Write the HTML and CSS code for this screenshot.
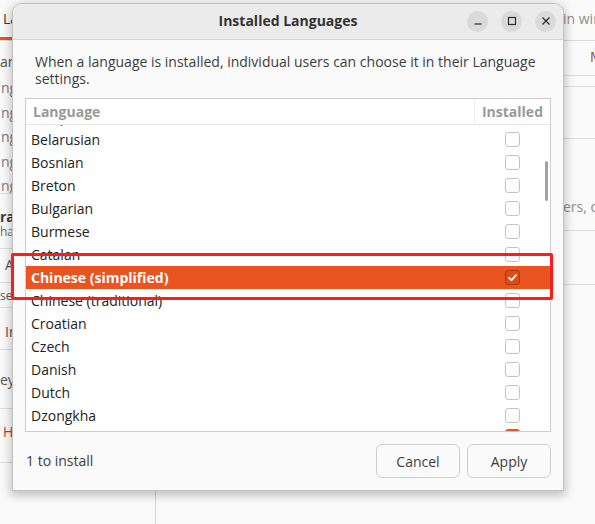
FILE: index.html
```
<!DOCTYPE html>
<html>
<head>
<meta charset="utf-8">
<link rel="stylesheet" href="styles.css">
</head>
<body>
<div class="desktop">
  <div class="bgwin">
    <div class="bg-left">
      <div class="bl-tabs"><span class="bl-tab">Lan</span></div>
      <div class="bl-sec bl-langs">
        <div class="bl-label">ang</div>
        <div class="bl-item">ngl</div>
        <div class="bl-item">ngl</div>
        <div class="bl-item">ngl</div>
        <div class="bl-item">ngl</div>
        <div class="bl-item">ngl</div>
      </div>
      <div class="bl-sec bl-drag">
        <div class="bl-bold">rag</div>
        <div class="bl-small">han</div>
      </div>
      <div class="bl-sec bl-apply">Ap</div>
      <div class="bl-sec bl-use">se</div>
      <div class="bl-sec bl-inst">Ins</div>
      <div class="bl-sec bl-key">eyb</div>
      <div class="bl-sec bl-help">He</div>
      <div class="bl-foot"></div>
    </div>
    <div class="bg-right">
      <div class="br-row br-1">in windows:</div>
      <div class="br-row br-2"><span class="br-m">M</span></div>
      <div class="br-row br-3"></div>
      <div class="br-row br-4"></div>
      <div class="br-row br-5">ers, dates and currency amounts.</div>
      <div class="br-row br-6"></div>
    </div>
  </div>

  <div class="dialog">
    <header class="dlg-head">
      <div class="dlg-spacer"></div>
      <div class="dlg-title">Installed Languages</div>
      <div class="wctl">
        <span class="wbtn"><svg width="10" height="10" viewBox="0 0 10 10"><line x1="1.5" y1="8" x2="8.5" y2="8"/></svg></span>
        <span class="wbtn"><svg width="10" height="10" viewBox="0 0 10 10"><rect x="1.5" y="1.5" width="7" height="7"/></svg></span>
        <span class="wbtn"><svg width="10" height="10" viewBox="0 0 10 10"><line x1="1.5" y1="1.5" x2="8.5" y2="8.5"/><line x1="8.5" y1="1.5" x2="1.5" y2="8.5"/></svg></span>
      </div>
    </header>
    <div class="dlg-body">
      <p class="intro">When a language is installed, individual users can choose it in their Language settings.</p>
      <div class="langlist">
        <div class="ll-head">
          <div class="col-lang">Language</div>
          <div class="col-inst">Installed</div>
        </div>
        <div class="ll-view">
          <div class="ll-rows">
            <div class="ll-row"><span class="ll-name">Basque</span><span class="ll-check"><span class="cb"></span></span></div>
            <div class="ll-row"><span class="ll-name">Belarusian</span><span class="ll-check"><span class="cb"></span></span></div>
            <div class="ll-row"><span class="ll-name">Bosnian</span><span class="ll-check"><span class="cb"></span></span></div>
            <div class="ll-row"><span class="ll-name">Breton</span><span class="ll-check"><span class="cb"></span></span></div>
            <div class="ll-row"><span class="ll-name">Bulgarian</span><span class="ll-check"><span class="cb"></span></span></div>
            <div class="ll-row"><span class="ll-name">Burmese</span><span class="ll-check"><span class="cb"></span></span></div>
            <div class="ll-row"><span class="ll-name">Catalan</span><span class="ll-check"><span class="cb"></span></span></div>
            <div class="ll-row is-selected"><span class="ll-name">Chinese (simplified)</span><span class="ll-check"><span class="cb cb-on"><svg width="13" height="13" viewBox="0 0 13 13"><polyline points="3,6.8 5.6,9.2 10,4.2"/></svg></span></span></div>
            <div class="ll-row"><span class="ll-name">Chinese (traditional)</span><span class="ll-check"><span class="cb"></span></span></div>
            <div class="ll-row"><span class="ll-name">Croatian</span><span class="ll-check"><span class="cb"></span></span></div>
            <div class="ll-row"><span class="ll-name">Czech</span><span class="ll-check"><span class="cb"></span></span></div>
            <div class="ll-row"><span class="ll-name">Danish</span><span class="ll-check"><span class="cb"></span></span></div>
            <div class="ll-row"><span class="ll-name">Dutch</span><span class="ll-check"><span class="cb"></span></span></div>
            <div class="ll-row"><span class="ll-name">Dzongkha</span><span class="ll-check"><span class="cb"></span></span></div>
            <div class="ll-row ll-last"><span class="ll-name">English</span><span class="ll-check"><span class="cb cb-inst"></span></span></div>
          </div>
          <div class="scrollind"></div>
        </div>
      </div>
    </div>
    <footer class="dlg-foot">
      <span class="status">1 to install</span>
      <div class="btns">
        <button class="btn">Cancel</button>
        <button class="btn">Apply</button>
      </div>
    </footer>
  </div>

  <div class="annot"></div>
</div>
</body>
</html>
```
FILE: styles.css
```
* { box-sizing: border-box; }
html, body { margin: 0; padding: 0; }
body {
  font-family: "Open Sans", "Noto Sans", sans-serif;
  font-size: 14px;
  color: #3d3d3d;
  background: #fafafa;
}
.desktop {
  position: relative;
  width: 595px;
  height: 524px;
  overflow: hidden;
  background: #fafafa;
}

/* background window */
.bgwin {
  display: flex;
  width: 595px;
  height: 524px;
  white-space: nowrap;
}
.bg-left {
  width: 156px;
  display: flex;
  flex-direction: column;
  overflow: hidden;
}
.bl-tabs {
  height: 41px;
  border-bottom: 1px solid #dcdcdc;
  display: flex;
}
.bl-tab {
  height: 40px;
  padding: 9px 10px 0 3px;
  border-bottom: 3px solid #e95420;
  color: #3d3d3d;
}
.bl-sec {
  border-bottom: 1px solid #dcdcdc;
  overflow: hidden;
}
.bl-langs { height: 153px; padding-top: 9px; }
.bl-label { line-height: 24px; color: #505050; margin-bottom: 2px; }
.bl-item { line-height: 24.5px; color: #7a7a7a; padding-left: 1px; }
.bl-drag { height: 55px; padding-top: 14px; }
.bl-bold { font-weight: 700; line-height: 17px; color: #3d3d3d; }
.bl-small { font-size: 12px; line-height: 13px; color: #6a6a6a; }
.bl-apply { height: 34px; padding: 6px 0 0 5px; color: #555; }
.bl-use { height: 25px; padding-top: 4px; font-size: 12px; color: #555; }
.bl-inst { height: 42px; padding: 14px 0 0 5px; color: #555; }
.bl-key { height: 59px; padding-top: 20px; color: #555; }
.bl-help { height: 54px; padding: 13px 0 0 3px; color: #c0392b; }
.bl-foot { flex: 1; border-right: 1px solid #d4d4d4; }

.bg-right {
  flex: 1;
  display: flex;
  flex-direction: column;
  overflow: hidden;
}
.br-row {
  border-bottom: 1px solid #dadada;
  padding-left: 407px;
  color: #8d8d8d;
  overflow: hidden;
}
.br-1 { height: 41px; padding-top: 9px; }
.br-2 { height: 35px; padding-top: 6px; }
.br-m { padding-left: 27px; color: #8a4a26; }
.br-3 { height: 11px; }
.br-4 { height: 52px; }
.br-5 { height: 92px; padding-top: 58px; }
.br-6 { height: 54px; }

/* dialog */
.dialog {
  position: absolute;
  left: 12px;
  top: 3px;
  width: 552px;
  height: 488px;
  border: 1px solid #c2c2c2;
  border-radius: 10px 10px 0 0;
  background: #fafafa;
  box-shadow: 0 3px 10px 2px rgba(0, 0, 0, 0.22);
  display: flex;
  flex-direction: column;
}
.dlg-head {
  height: 36px;
  flex: none;
  background: #ebebeb;
  border-bottom: 1px solid #d5d5d5;
  border-radius: 9px 9px 0 0;
  display: grid;
  grid-template-columns: 1fr auto 1fr;
  align-items: center;
}
.dlg-title {
  font-weight: 700;
  font-size: 14px;
  color: #333;
  padding-bottom: 2px;
}
.wctl {
  justify-self: end;
  display: flex;
  gap: 13px;
  padding-right: 7px;
  padding-bottom: 1px;
}
.wbtn {
  width: 21px;
  height: 21px;
  border-radius: 50%;
  background: #dadada;
  display: flex;
  align-items: center;
  justify-content: center;
}
.wbtn svg { fill: none; stroke: #2e2e2e; stroke-width: 1.2; }

.dlg-body {
  flex: 1;
  display: flex;
  flex-direction: column;
  padding: 13px 12px 0 12px;
}
.intro {
  margin: 0 0 11px 0;
  padding-left: 10px;
  line-height: 17px;
  color: #3d3d3d;
}
.langlist {
  border: 1px solid #cdcdcd;
  background: #fff;
  height: 334px;
  display: flex;
  flex-direction: column;
}
.ll-head {
  height: 26px;
  flex: none;
  display: flex;
  border-bottom: 1px solid #e4e4e4;
  font-weight: 700;
  color: #999;
}
.col-lang {
  flex: 1;
  padding-left: 7px;
  line-height: 25px;
}
.col-inst {
  width: 76px;
  text-align: center;
  border-left: 1px solid #ededed;
  line-height: 25px;
}
.ll-view {
  position: relative;
  flex: 1;
  overflow: hidden;
}
.ll-rows { margin-top: -20px; }
.ll-row {
  height: 23px;
  display: flex;
  align-items: center;
  color: #222;
}
.ll-last { align-items: flex-start; padding-top: 2px; }
.ll-name { flex: 1; padding-left: 5px; }
.ll-check {
  width: 76px;
  display: flex;
  justify-content: center;
  padding-left: 1px;
}
.cb {
  width: 15px;
  height: 15px;
  border: 1px solid #c4c4c4;
  border-radius: 3px;
  background: #fff;
  display: flex;
  align-items: center;
  justify-content: center;
}
.cb svg { fill: none; stroke: #fff; stroke-width: 1.8; stroke-linecap: round; stroke-linejoin: round; }
.is-selected { background: #e95420; color: #fff; font-weight: 700; }
.cb-on { background: #dc4d1c; border-color: #a93a12; }
.cb-inst { background: #e95420; border-color: #e95420; }
.scrollind {
  position: absolute;
  right: 2px;
  top: 36px;
  width: 3px;
  height: 40px;
  border-radius: 2px;
  background: #a3a3a3;
}

.dlg-foot {
  flex: none;
  display: flex;
  align-items: center;
  justify-content: space-between;
  padding: 12px 12px 12px 13px;
}
.status { color: #3d3d3d; margin-top: -2px; }
.btns { display: flex; gap: 7px; }
.btn {
  width: 84px;
  height: 34px;
  border: 1px solid #cdcdcd;
  border-radius: 6px;
  background: #fafafa;
  font-family: "Open Sans", "Noto Sans", sans-serif;
  font-size: 14px;
  color: #3d3d3d;
  padding: 0;
}

/* annotation overlay */
.annot {
  position: absolute;
  left: 11px;
  top: 253px;
  width: 542px;
  height: 47px;
  border: 3px solid #ff1b1b;
  border-radius: 2px;
}
```
